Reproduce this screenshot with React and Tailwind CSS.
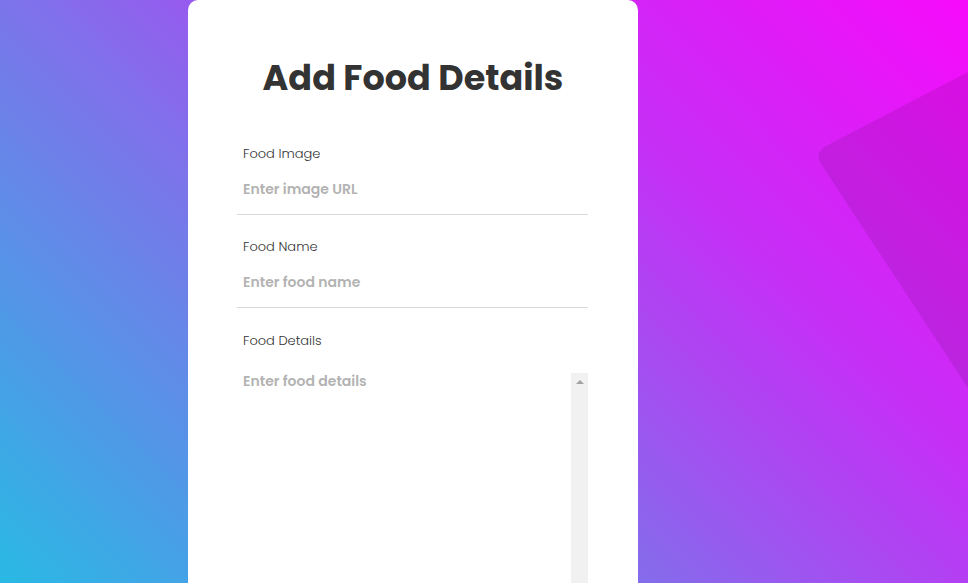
import React from "react";

const font = { fontFamily: "Poppins, Lato, 'Noto Sans', sans-serif" };

function Field({ label, placeholder, gap }) {
    return (
        <div className={gap}>
            <label className="block h-[20px] pl-[6px] text-[13px] font-light leading-[20px] text-[#333]">{label}</label>
            <input
                type="text"
                placeholder={placeholder}
                className="block h-[51px] w-full border-b border-[#d9d9d9] px-[6px] text-[14px] font-semibold text-[#333] outline-none placeholder:text-[#b3b3b3]"
            />
        </div>
    );
}

export default function App() {
    return (
        <div
            className="relative h-[583px] w-full overflow-hidden bg-[linear-gradient(45deg,#29b9e4_0%,#7c74ea_38%,#c52ff6_70%,#f70afa_100%)]"
            style={font}
        >
            {/* decorative shape on the right */}
            <svg className="absolute right-0 top-0" width="160" height="400" viewBox="808 0 160 400">
                <path d="M 968 72 L 826 146 Q 814 153 821 164 L 968 388 Z" fill="#000" fillOpacity="0.09" />
            </svg>

            <div className="relative z-10 ml-[188px] h-[620px] w-[450px] rounded-[10px] bg-white">
                <h1 className="pt-[50px] text-center text-[35px] font-bold leading-[56px] text-[#333]">
                    Add Food Details
                </h1>

                <form className="pl-[49px] pr-[50px] pt-[38px]">
                    <Field label="Food Image" placeholder="Enter image URL" gap="mb-[22px]" />
                    <Field label="Food Name" placeholder="Enter food name" gap="mb-[23px]" />

                    <div>
                        <label className="block h-[20px] pl-[6px] text-[13px] font-light leading-[20px] text-[#333]">Food Details</label>
                        <div className="mt-[22px] flex h-[260px]">
                            <textarea
                                placeholder="Enter food details"
                                className="flex-1 resize-none overflow-hidden px-[6px] pt-[0px] text-[14px] font-semibold leading-[16px] text-[#333] outline-none placeholder:text-[#b3b3b3]"
                            />
                            <div className="w-[17px] bg-[#f1f1f1]">
                                <div className="mx-auto mt-[7px] h-0 w-0 border-x-[4px] border-b-[4px] border-x-transparent border-b-[#a3a3a3]" />
                            </div>
                        </div>
                    </div>
                </form>
            </div>
        </div>
    );
}
